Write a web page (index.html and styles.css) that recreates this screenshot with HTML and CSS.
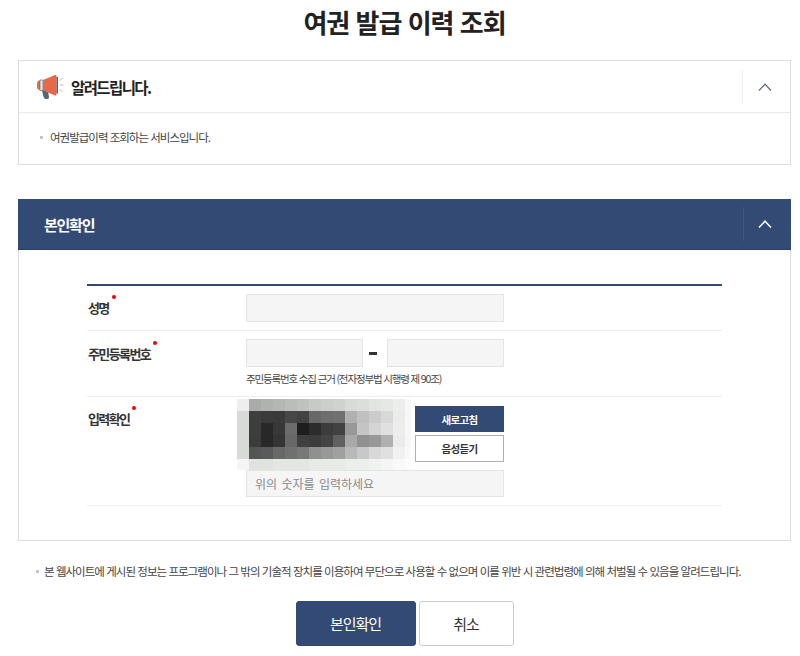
FILE: index.html
```html
<!DOCTYPE html>
<html lang="ko">
<head>
<meta charset="utf-8">
<title>여권 발급 이력 조회</title>
<link rel="stylesheet" href="styles.css">
</head>
<body>
<main class="page">
  <h1 class="title">여권 발급 이력 조회</h1>

  <section class="notice">
    <header class="notice-head">
      <svg class="mega" width="28" height="26" viewBox="0 0 28 26">
        <path d="M5.5 15 L11.5 15 L13 23 Q13.2 25 11.3 25 L9.6 25 Q8.2 25 7.8 23.6 Z" fill="#566573"/>
        <path d="M4 6.5 L4 16 L3 16 Q1 15.5 1 13 L1 9.5 Q1 7 3 6.5 Z" fill="#e8694a"/>
        <rect x="4" y="6" width="3" height="10.5" fill="#e3e6e8"/>
        <path d="M4 6 H7 V16.5 H4 Z" fill="none" stroke="#566573" stroke-width="0.6"/>
        <path d="M7 6 L19 1 Q20.5 0.5 20.5 2 L20.5 20.5 Q20.5 22 19 21.5 L7 16.5 Z" fill="#e8694a"/>
        <rect x="20.5" y="3" width="1.5" height="16.5" fill="#566573"/>
        <path d="M23.5 6.5 L26.5 4.5 M24 11 L27.5 11 M23.5 15.5 L26.5 17.5" stroke="#b4bcc4" stroke-width="1" fill="none"/>
      </svg>
      <h2 class="notice-title">알려드립니다.</h2>
      <span class="toggle">
        <svg width="14" height="8" viewBox="0 0 14 8"><path d="M1 7.5 L7 1.2 L13 7.5" fill="none" stroke="#5a6675" stroke-width="1.2"/></svg>
      </span>
    </header>
    <p class="notice-body"><span class="dot"></span>여권발급이력 조회하는 서비스입니다.</p>
  </section>

  <section class="verify">
    <header class="verify-head">
      <h2 class="verify-title">본인확인</h2>
      <span class="toggle toggle-dark">
        <svg width="14" height="8" viewBox="0 0 14 8"><path d="M1 7.5 L7 1.2 L13 7.5" fill="none" stroke="#ffffff" stroke-width="1.5"/></svg>
      </span>
    </header>
    <div class="form">
      <div class="row row-name">
        <div class="label"><span class="label-text">성명<i class="req"></i></span></div>
        <div class="field"><input class="input input-full" type="text"></div>
      </div>
      <div class="row row-id">
        <div class="label"><span class="label-text">주민등록번호<i class="req"></i></span></div>
        <div class="field">
          <div class="id-inputs">
            <input class="input input-half" type="text">
            <span class="dash"></span>
            <input class="input input-half" type="text">
          </div>
          <p class="hint">주민등록번호 수집 근거 (전자정부법 시행령 제 90조)</p>
        </div>
      </div>
      <div class="row row-captcha">
        <div class="label"><span class="label-text">입력확인<i class="req"></i></span></div>
        <div class="field">
          <div class="captcha-line">
            <svg class="captcha" width="174" height="71" viewBox="0 0 174 71" shape-rendering="crispEdges">
              <g>
                <rect x="0" y="0" width="12" height="12" fill="#eeeeee"/><rect x="12" y="0" width="12" height="12" fill="#a9aba9"/><rect x="24" y="0" width="12" height="12" fill="#b0b2b0"/><rect x="36" y="0" width="12" height="12" fill="#b5b7b5"/><rect x="48" y="0" width="12" height="12" fill="#bbbdbb"/><rect x="60" y="0" width="12" height="12" fill="#c0c2c0"/><rect x="72" y="0" width="12" height="12" fill="#c8cac8"/><rect x="84" y="0" width="12" height="12" fill="#cccecc"/><rect x="96" y="0" width="12" height="12" fill="#d0d2d0"/><rect x="108" y="0" width="12" height="12" fill="#d8dad8"/><rect x="120" y="0" width="12" height="12" fill="#dcdedc"/><rect x="132" y="0" width="12" height="12" fill="#e2e4e2"/><rect x="144" y="0" width="12" height="12" fill="#e6e8e6"/><rect x="156" y="0" width="12" height="12" fill="#eceeec"/><rect x="168" y="0" width="6" height="12" fill="#f6f7f6"/>
                <rect x="0" y="12" width="12" height="12" fill="#d8dad8"/><rect x="12" y="12" width="12" height="12" fill="#3e3e3e"/><rect x="24" y="12" width="12" height="12" fill="#3a3a3a"/><rect x="36" y="12" width="12" height="12" fill="#3a3a3a"/><rect x="48" y="12" width="12" height="12" fill="#484848"/><rect x="60" y="12" width="12" height="12" fill="#424242"/><rect x="72" y="12" width="12" height="12" fill="#686868"/><rect x="84" y="12" width="12" height="12" fill="#6e6e6e"/><rect x="96" y="12" width="12" height="12" fill="#707070"/><rect x="108" y="12" width="12" height="12" fill="#b0b0b0"/><rect x="120" y="12" width="12" height="12" fill="#c0c0c0"/><rect x="132" y="12" width="12" height="12" fill="#cccccc"/><rect x="144" y="12" width="12" height="12" fill="#d8d8d8"/><rect x="156" y="12" width="12" height="12" fill="#eaecea"/><rect x="168" y="12" width="6" height="12" fill="#f6f7f6"/>
                <rect x="0" y="24" width="12" height="12" fill="#d8dad8"/><rect x="12" y="24" width="12" height="12" fill="#3e3e3e"/><rect x="24" y="24" width="12" height="12" fill="#282828"/><rect x="36" y="24" width="12" height="12" fill="#383838"/><rect x="48" y="24" width="12" height="12" fill="#6c6c6c"/><rect x="60" y="24" width="12" height="12" fill="#1e1e1e"/><rect x="72" y="24" width="12" height="12" fill="#2c2c2c"/><rect x="84" y="24" width="12" height="12" fill="#3c3c3c"/><rect x="96" y="24" width="12" height="12" fill="#424242"/><rect x="108" y="24" width="12" height="12" fill="#989898"/><rect x="120" y="24" width="12" height="12" fill="#c4c4c4"/><rect x="132" y="24" width="12" height="12" fill="#d4d4d4"/><rect x="144" y="24" width="12" height="12" fill="#e0e0e0"/><rect x="156" y="24" width="12" height="12" fill="#eceeec"/><rect x="168" y="24" width="6" height="12" fill="#f6f7f6"/>
                <rect x="0" y="36" width="12" height="12" fill="#d8dad8"/><rect x="12" y="36" width="12" height="12" fill="#3c3c3c"/><rect x="24" y="36" width="12" height="12" fill="#282828"/><rect x="36" y="36" width="12" height="12" fill="#343434"/><rect x="48" y="36" width="12" height="12" fill="#686868"/><rect x="60" y="36" width="12" height="12" fill="#404040"/><rect x="72" y="36" width="12" height="12" fill="#3c3c3c"/><rect x="84" y="36" width="12" height="12" fill="#444444"/><rect x="96" y="36" width="12" height="12" fill="#606060"/><rect x="108" y="36" width="12" height="12" fill="#a8a8a8"/><rect x="120" y="36" width="12" height="12" fill="#909090"/><rect x="132" y="36" width="12" height="12" fill="#989898"/><rect x="144" y="36" width="12" height="12" fill="#b0b0b0"/><rect x="156" y="36" width="12" height="12" fill="#eaecea"/><rect x="168" y="36" width="6" height="12" fill="#f6f7f6"/>
                <rect x="0" y="48" width="12" height="12" fill="#d8dad8"/><rect x="12" y="48" width="12" height="12" fill="#555555"/><rect x="24" y="48" width="12" height="12" fill="#5a5a5a"/><rect x="36" y="48" width="12" height="12" fill="#686868"/><rect x="48" y="48" width="12" height="12" fill="#707070"/><rect x="60" y="48" width="12" height="12" fill="#787878"/><rect x="72" y="48" width="12" height="12" fill="#909090"/><rect x="84" y="48" width="12" height="12" fill="#989898"/><rect x="96" y="48" width="12" height="12" fill="#a0a0a0"/><rect x="108" y="48" width="12" height="12" fill="#b8b8b8"/><rect x="120" y="48" width="12" height="12" fill="#c8c8c8"/><rect x="132" y="48" width="12" height="12" fill="#d8d8d8"/><rect x="144" y="48" width="12" height="12" fill="#e0e0e0"/><rect x="156" y="48" width="12" height="12" fill="#f0f2f0"/><rect x="168" y="48" width="6" height="12" fill="#f8f9f8"/>
                <rect x="0" y="60" width="12" height="11" fill="#f4f5f4"/><rect x="12" y="60" width="12" height="11" fill="#e0e2e0"/><rect x="24" y="60" width="12" height="11" fill="#e0e2e0"/><rect x="36" y="60" width="12" height="11" fill="#e4e6e4"/><rect x="48" y="60" width="12" height="11" fill="#e4e6e4"/><rect x="60" y="60" width="12" height="11" fill="#e4e6e4"/><rect x="72" y="60" width="12" height="11" fill="#e8eae8"/><rect x="84" y="60" width="12" height="11" fill="#e8eae8"/><rect x="96" y="60" width="12" height="11" fill="#e8eae8"/><rect x="108" y="60" width="12" height="11" fill="#eceeec"/><rect x="120" y="60" width="12" height="11" fill="#eceeec"/><rect x="132" y="60" width="12" height="11" fill="#f0f2f0"/><rect x="144" y="60" width="12" height="11" fill="#f4f5f4"/><rect x="156" y="60" width="12" height="11" fill="#f8f9f8"/><rect x="168" y="60" width="6" height="11" fill="#fcfcfc"/>
              </g>
            </svg>
            <div class="captcha-btns">
              <button class="btn-small btn-small-navy" type="button">새로고침</button>
              <button class="btn-small btn-small-white" type="button">음성듣기</button>
            </div>
          </div>
          <input class="input input-full input-captcha" type="text" placeholder="위의 숫자를 입력하세요">
        </div>
      </div>
    </div>
  </section>

  <p class="legal"><span class="dot"></span>본 웹사이트에 게시된 정보는 프로그램이나 그 밖의 기술적 장치를 이용하여 무단으로 사용할 수 없으며 이를 위반 시 관련법령에 의해 처벌될 수 있음을 알려드립니다.</p>

  <div class="actions">
    <button class="btn btn-primary" type="button">본인확인</button>
    <button class="btn btn-cancel" type="button">취소</button>
  </div>
</main>
</body>
</html>
```

FILE: styles.css
```css
* { box-sizing: border-box; }
html, body { margin: 0; padding: 0; background: #fff; }
body {
  font-family: "Noto Sans CJK KR", "Noto Sans", sans-serif;
  color: #222;
  overflow: hidden;
}
.page {
  width: 773px;
  margin-left: 18px;
  height: 656px;
}
.title {
  margin: 0;
  height: 60px;
  padding-top: 1px;
  text-align: center;
  font-size: 26px;
  line-height: 42px;
  font-weight: 700;
  letter-spacing: -1px;
  color: #222;
}
.notice {
  height: 105px;
  border: 1px solid #dcdcdc;
}
.notice-head {
  height: 52px;
  display: flex;
  align-items: center;
  padding-left: 17px;
  border-bottom: 1px solid #eaeaea;
}
.mega { flex: none; margin-right: 7px; margin-top: 1px; }
.notice-title {
  margin: 0;
  font-size: 15.5px;
  font-weight: 700;
  letter-spacing: -1.6px;
  color: #222;
  flex: 1;
}
.toggle {
  width: 48px;
  height: 34px;
  padding-right: 3px;
  border-left: 1px solid #eeeeee;
  display: flex;
  align-items: center;
  justify-content: center;
  flex: none;
}
.notice-body {
  margin: 0;
  padding-top: 15px;
  font-size: 11.5px;
  line-height: 18px;
  letter-spacing: -1px;
  color: #444;
  padding-left: 21px;
  display: flex;
  align-items: center;
}
.dot {
  width: 3px;
  height: 3px;
  background: #c4c4c4;
  margin-right: 7px;
  flex: none;
}
.verify {
  margin-top: 34px;
  height: 342px;
  border: 1px solid #dcdcdc;
  border-top: 0;
}
.verify-head {
  height: 51px;
  background: #334a75;
  margin: 0 -1px;
  display: flex;
  align-items: center;
  padding-left: 26px;
  border-bottom: 1px solid #2b3f66;
}
.verify-title {
  margin: 0;
  flex: 1;
  font-size: 15px;
  font-weight: 700;
  letter-spacing: -1.25px;
  color: #fff;
}
.toggle-dark { border-left-color: #42577f; padding-right: 5px; }
.form {
  margin: 34px 68px 0 68px;
  border-top: 2px solid #334a75;
}
.row {
  display: flex;
  border-bottom: 1px solid #eeeeee;
}
.row-name { height: 45px; padding-top: 8px; }
.row-id { height: 66px; padding-top: 8px; }
.row-captcha { height: 109px; }
.label { width: 159px; flex: none; padding-left: 1px; }
.label-text {
  position: relative;
  display: inline-block;
  font-size: 13px;
  line-height: 26px;
  font-weight: 700;
  letter-spacing: -1.6px;
  color: #333;
}
.req {
  position: absolute;
  right: -7px;
  top: 0;
  width: 4px;
  height: 4px;
  border-radius: 50%;
  background: #f00000;
}
.row-id .label-text { top: 1px; }
.row-captcha .label-text { top: 8px; }
.field { flex: 1; }
.input {
  display: block;
  height: 28px;
  border: 1px solid #e4e4e4;
  background: #f5f5f5;
  padding: 0 8px;
  font-family: inherit;
  outline: none;
}
.input-full { width: 258px; }
.input-half { width: 117px; }
.id-inputs { display: flex; align-items: center; width: 258px; justify-content: space-between; }
.dash { width: 8px; height: 3px; margin-right: 4px; background: #333; }
.hint {
  margin: 4px 0 0;
  font-size: 10.5px;
  line-height: 15px;
  letter-spacing: -1.15px;
  color: #444;
}
.captcha-line {
  display: flex;
  margin-left: -9px;
  height: 73px;
  padding-top: 2px;
}
.captcha { display: block; flex: none; }
.captcha-btns {
  margin-left: 4px;
  padding-top: 7px;
  display: flex;
  flex-direction: column;
  gap: 3px;
}
.btn-small {
  width: 89px;
  height: 26px;
  padding: 0;
  font-family: inherit;
  font-size: 10.5px;
  font-weight: 700;
  letter-spacing: -0.6px;
  border-radius: 0;
}
.btn-small-navy { background: #334a75; border: 1px solid #334a75; color: #fff; }
.btn-small-white { background: #fff; border: 1px solid #aeaeae; color: #333; height: 27px; }
.input-captcha {
  height: 27px;
  font-size: 12px;
  letter-spacing: 0;
  word-spacing: 1px;
}
.input-captcha::placeholder { color: #8a8a8a; opacity: 1; }
.legal {
  margin: 21px 0 0 18px;
  font-size: 11.5px;
  line-height: 18px;
  letter-spacing: -0.96px;
  color: #444;
  display: flex;
  align-items: center;
  white-space: nowrap;
}
.legal .dot { margin-right: 5px; }
.actions {
  margin-top: 21px;
  display: flex;
  justify-content: center;
  gap: 3px;
}
.btn {
  height: 45px;
  border-radius: 3px;
  padding: 0;
  font-family: inherit;
  font-size: 15px;
  letter-spacing: -1px;
}
.btn-primary { width: 120px; background: #334a75; border: 1px solid #334a75; color: #fff; }
.btn-cancel { width: 95px; background: #fff; border: 1px solid #cccccc; color: #333; }
```
